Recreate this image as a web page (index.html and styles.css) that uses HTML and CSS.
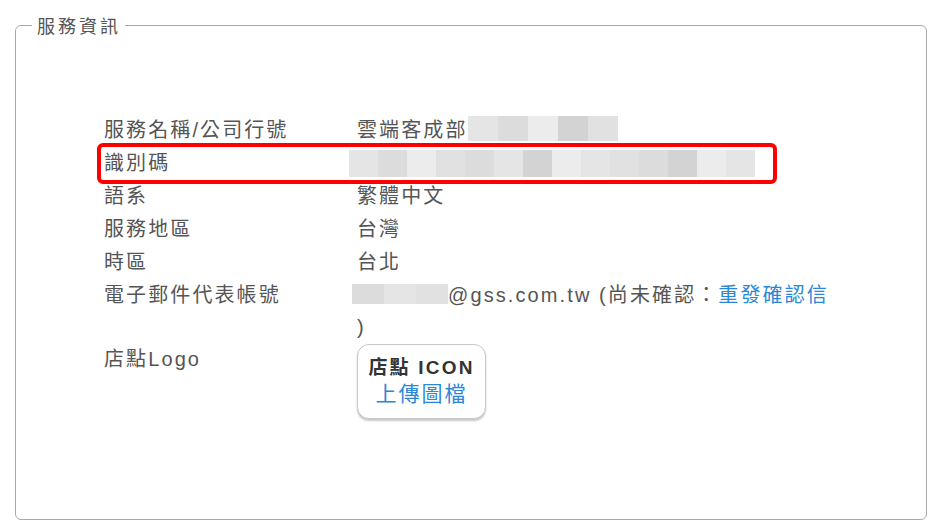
FILE: index.html
```html
<!DOCTYPE html>
<html lang="zh-Hant">
<head>
    <meta charset="UTF-8">
    <meta name="viewport" content="width=device-width, initial-scale=1.0">
    <title>服務資訊</title>
    <link rel="stylesheet" href="styles.css">
</head>
<body>
    <fieldset class="panel">
        <legend>服務資訊</legend>
        <div class="info">
            <div class="row">
                <div class="label">服務名稱/公司行號</div>
                <div class="value">雲端客成部<span class="blur blur-name"><i class="s1"></i><i class="s2"></i><i class="s3"></i><i class="s4"></i><i class="s5"></i></span></div>
            </div>
            <div class="row highlight">
                <div class="label">識別碼</div>
                <div class="value"><span class="blur blur-id"><i class="s1"></i><i class="s2"></i><i class="s3"></i><i class="s5"></i><i class="s2"></i><i class="s1"></i><i class="s4"></i><i class="s3"></i><i class="s1"></i><i class="s5"></i><i class="s2"></i><i class="s4"></i><i class="s3"></i><i class="s1"></i></span></div>
            </div>
            <div class="row">
                <div class="label">語系</div>
                <div class="value">繁體中文</div>
            </div>
            <div class="row">
                <div class="label">服務地區</div>
                <div class="value">台灣</div>
            </div>
            <div class="row">
                <div class="label">時區</div>
                <div class="value">台北</div>
            </div>
            <div class="row mail-row">
                <div class="label">電子郵件代表帳號</div>
                <div class="value"><span class="nowrap"><span class="blur blur-mail"><i class="s2"></i><i class="s1"></i><i class="s5"></i></span>@gss.com.tw (尚未確認：<a href="#" class="link">重發確認信</a></span><br>)</div>
            </div>
            <div class="row">
                <div class="label">店點Logo</div>
                <div class="value">
                    <button class="upload">
                        <span class="upload-title">店點 ICON</span>
                        <span class="upload-link">上傳圖檔</span>
                    </button>
                </div>
            </div>
        </div>
    </fieldset>
</body>
</html>
```

FILE: styles.css
```css
body {
    margin: 0;
    padding: 12px 22px 11px 15px;
    font-family: "Liberation Sans", "Noto Sans CJK TC", sans-serif;
    background-color: #fff;
    color: #555;
}

.panel {
    margin: 0;
    padding: 0;
    height: 508px;
    box-sizing: border-box;
    border: 1px solid #aaa;
    border-radius: 6px;
}

.panel legend {
    margin-left: 16px;
    padding: 0 4px 0 5px;
    font-size: 18px;
    letter-spacing: 3px;
    color: #555;
}

.info {
    padding: 76px 0 0 85px;
    width: 672px;
}

.row {
    display: flex;
    font-size: 20px;
    letter-spacing: 2.1px;
    line-height: 33px;
    padding-left: 3px;
}

.highlight {
    outline: 4px solid #f00;
    border-radius: 2px;
}

.label {
    width: 253px;
    flex-shrink: 0;
}

.highlight .value {
    margin-left: -8px;
}

.value {
    flex: 1;
}

.mail-row {
    line-height: 32px;
}

.nowrap {
    white-space: nowrap;
}

.link {
    color: #2b87d6;
    text-decoration: none;
}

.blur {
    display: inline-flex;
    vertical-align: middle;
    height: 25px;
}

.blur i {
    display: block;
    width: 29px;
    height: 100%;
}

.blur .s1 { background-color: #e5e5e5; }
.blur .s2 { background-color: #dcdcdc; }
.blur .s3 { background-color: #ececec; }
.blur .s4 { background-color: #d3d3d3; }
.blur .s5 { background-color: #e1e1e1; }

.blur-name {
    margin-top: -6px;
}

.blur-name i {
    width: 30px;
}

.blur-id {
    height: 27px;
    margin-top: -3px;
}

.blur-mail {
    height: 20px;
    margin-top: -6px;
    margin-left: -5px;
}

.blur-mail i {
    width: 32px;
}

.upload {
    display: flex;
    flex-direction: column;
    align-items: center;
    margin-top: 1px;
    width: 129px;
    height: 75px;
    padding: 10px 0 0;
    border: 1px solid #c8c8c8;
    border-radius: 12px;
    background-color: #fff;
    box-shadow: 0 2px 2px rgba(0, 0, 0, 0.22);
    font-family: "Liberation Sans", "Noto Sans CJK TC", sans-serif;
    cursor: pointer;
}

.upload-title {
    font-size: 19px;
    font-weight: bold;
    letter-spacing: 2.2px;
    color: #333;
    line-height: 26px;
}

.upload-link {
    font-size: 21px;
    letter-spacing: 2px;
    color: #2b87d6;
    line-height: 26px;
}
```
